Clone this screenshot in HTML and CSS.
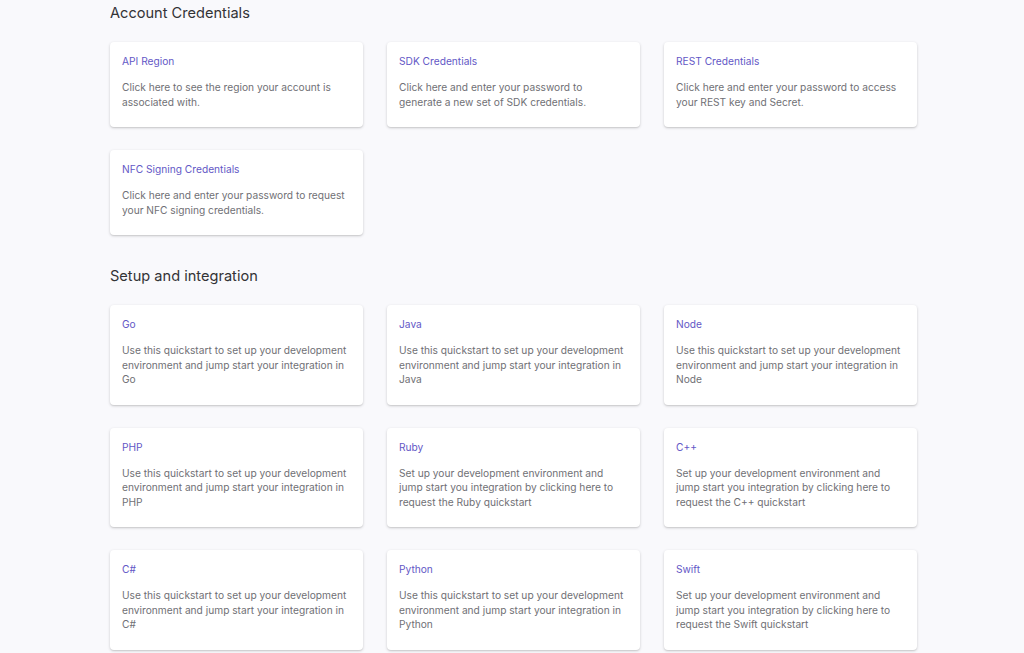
FILE: index.html
```html
<!DOCTYPE html>
<html>
<head>
<meta charset="utf-8">
<link rel="stylesheet" href="styles.css">
</head>
<body>
<main class="page">
  <section class="section">
    <h2 class="section-title">Account Credentials</h2>
    <div class="grid">
      <div class="card"><div class="card-title">API Region</div><p class="card-desc">Click here to see the region your account is associated with.</p></div>
      <div class="card"><div class="card-title">SDK Credentials</div><p class="card-desc">Click here and enter your password to generate a new set of SDK credentials.</p></div>
      <div class="card"><div class="card-title">REST Credentials</div><p class="card-desc">Click here and enter your password to access your REST key and Secret.</p></div>
      <div class="card"><div class="card-title">NFC Signing Credentials</div><p class="card-desc">Click here and enter your password to request your NFC signing credentials.</p></div>
    </div>
  </section>
  <section class="section">
    <h2 class="section-title">Setup and integration</h2>
    <div class="grid">
      <div class="card"><div class="card-title">Go</div><p class="card-desc">Use this quickstart to set up your development environment and jump start your integration in Go</p></div>
      <div class="card"><div class="card-title">Java</div><p class="card-desc">Use this quickstart to set up your development environment and jump start your integration in Java</p></div>
      <div class="card"><div class="card-title">Node</div><p class="card-desc">Use this quickstart to set up your development environment and jump start your integration in Node</p></div>
      <div class="card"><div class="card-title">PHP</div><p class="card-desc">Use this quickstart to set up your development environment and jump start your integration in PHP</p></div>
      <div class="card"><div class="card-title">Ruby</div><p class="card-desc">Set up your development environment and jump start you integration by clicking here to request the Ruby quickstart</p></div>
      <div class="card"><div class="card-title">C++</div><p class="card-desc">Set up your development environment and jump start you integration by clicking here to request the C++ quickstart</p></div>
      <div class="card"><div class="card-title">C#</div><p class="card-desc">Use this quickstart to set up your development environment and jump start your integration in C#</p></div>
      <div class="card"><div class="card-title">Python</div><p class="card-desc">Use this quickstart to set up your development environment and jump start your integration in Python</p></div>
      <div class="card"><div class="card-title">Swift</div><p class="card-desc">Set up your development environment and jump start you integration by clicking here to request the Swift quickstart</p></div>
    </div>
  </section>
</main>
</body>
</html>
```
FILE: styles.css
```css
html, body {
  margin: 0;
  padding: 0;
  background: #f9f9fc;
  font-family: Inter, "Noto Sans", sans-serif;
}
.page {
  width: 807px;
  margin-left: 110px;
  padding-top: 3px;
}
.section {
  margin-bottom: 31px;
}
.section-title {
  margin: 0 0 19px 0;
  font-size: 14.6px;
  line-height: 20px;
  font-weight: 400;
  color: #333336;
}
.grid {
  display: grid;
  grid-template-columns: repeat(3, 253px);
  gap: 23px 24px;
}
.card {
  background: #fff;
  border-radius: 4px;
  box-shadow: 0 1px 3px rgba(0,0,0,0.18), 0 1px 1px rgba(0,0,0,0.06);
  padding: 12px 14px 18px 12px;
}
.card-title {
  font-size: 10.2px;
  line-height: 14px;
  color: #6357c6;
  margin-bottom: 12px;
}
.card-desc {
  margin: 0;
  font-size: 10.2px;
  line-height: 14.5px;
  color: #707075;
}
```
